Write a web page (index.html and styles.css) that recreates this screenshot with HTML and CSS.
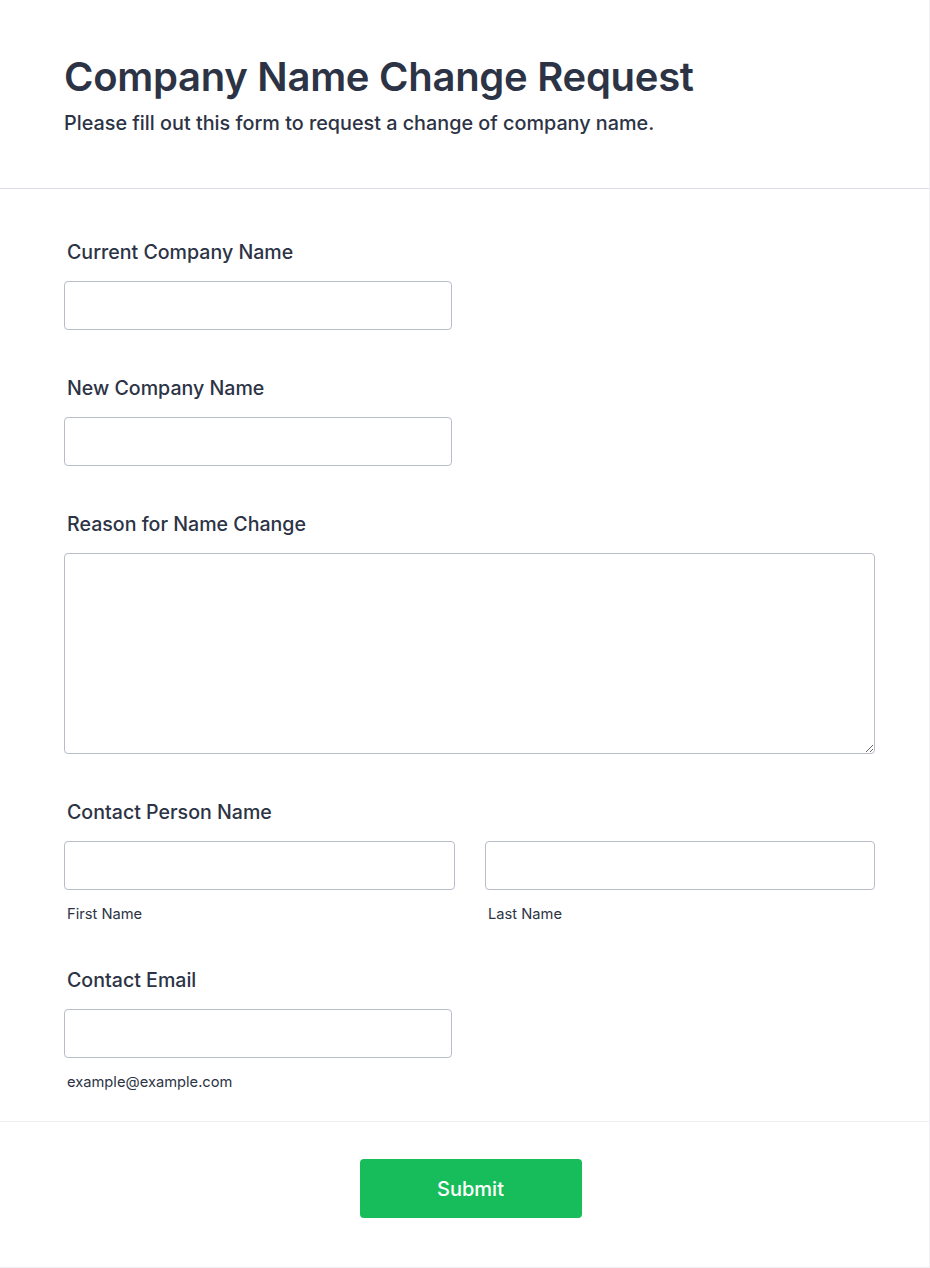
FILE: index.html
```html
<!DOCTYPE html>
<html lang="en">
<head>
<meta charset="utf-8">
<title>Company Name Change Request</title>
<link rel="stylesheet" href="styles.css">
</head>
<body>
<div class="card">
  <header class="head">
    <h1 class="title">Company Name Change Request</h1>
    <p class="subtitle">Please fill out this form to request a change of company name.</p>
  </header>
  <form class="form">
    <div class="field">
      <label class="label">Current Company Name</label>
      <input class="input input-md" type="text">
    </div>
    <div class="field">
      <label class="label">New Company Name</label>
      <input class="input input-md" type="text">
    </div>
    <div class="field">
      <label class="label">Reason for Name Change</label>
      <textarea class="textarea"></textarea>
    </div>
    <div class="field field-sub">
      <label class="label">Contact Person Name</label>
      <div class="name-grid">
        <div class="sub">
          <input class="input" type="text">
          <span class="sublabel">First Name</span>
        </div>
        <div class="sub">
          <input class="input" type="text">
          <span class="sublabel">Last Name</span>
        </div>
      </div>
    </div>
    <div class="field last">
      <label class="label">Contact Email</label>
      <input class="input input-md" type="email">
      <span class="sublabel">example@example.com</span>
    </div>
  </form>
  <footer class="foot">
    <button class="submit" type="button">Submit</button>
  </footer>
</div>
</body>
</html>
```

FILE: styles.css
```css
* { box-sizing: border-box; }
html, body { margin: 0; padding: 0; background: #ffffff; }
body {
  font-family: Inter, "Noto Sans", sans-serif;
  color: #2c3345;
}
.card {
  width: 930px;
  height: 1268px;
  border-right: 1px solid #f0f0f4;
  border-bottom: 1px solid #f0f0f4;
  background: #fff;
}
.head {
  padding: 53px 54px 53px 64px;
  border-bottom: 1px solid #dcdcee;
}
.title {
  margin: 0;
  font-size: 40px;
  line-height: 48px;
  font-weight: 600;
  letter-spacing: -0.28px;
  color: #2c3345;
}
.subtitle {
  margin: 10px 0 0;
  font-size: 19.8px;
  line-height: 24px;
  font-weight: 500;
  color: #2c3345;
}
.form {
  padding: 51px 54px 30px 64px;
  border-bottom: 1px solid #eeeef3;
}
.field {
  display: flex;
  flex-direction: column;
  margin-bottom: 46px;
}
.field.field-sub { margin-bottom: 45px; }
.field.last { margin-bottom: 0; }
.label {
  padding-left: 3px;
  font-size: 19.6px;
  line-height: 24px;
  font-weight: 500;
  margin-bottom: 17px;
  color: #2c3345;
}
.input {
  display: block;
  height: 49px;
  width: 100%;
  border: 1px solid #b8bdc9;
  border-radius: 4px;
  background: #fff;
  font: inherit;
  padding: 0 12px;
  margin: 0;
}
.input-md { width: 388px; }
.textarea {
  display: block;
  width: 100%;
  height: 201px;
  border: 1px solid #b8bdc9;
  border-radius: 4px;
  font: inherit;
  margin: 0;
  padding: 10px 12px;
}
.name-grid {
  display: grid;
  grid-template-columns: 391px 390px;
  column-gap: 30px;
}
.sub { display: flex; flex-direction: column; }
.sublabel {
  padding-left: 3px;
  margin-top: 15px;
  font-size: 14.7px;
  line-height: 18px;
  color: #2c3345;
}
.foot {
  display: flex;
  justify-content: center;
  padding: 37px 55px 50px 67px;
}
.submit {
  width: 222px;
  height: 59px;
  border: 0;
  border-radius: 4px;
  background: #18bd5b;
  color: #fff;
  font-family: Inter, "Noto Sans", sans-serif;
  font-size: 20px;
  font-weight: 500;
}
```
